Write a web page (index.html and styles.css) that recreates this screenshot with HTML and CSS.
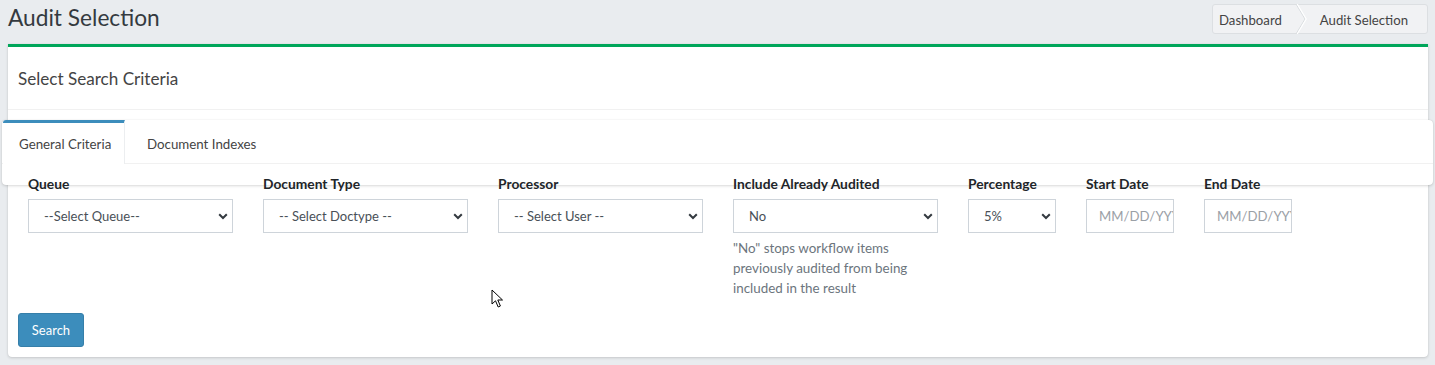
FILE: index.html
```html
<!DOCTYPE html>
<html lang="en">

<head>
    <meta charset="UTF-8">
    <meta name="viewport" content="width=device-width, initial-scale=1.0">
    <title>Audit Selection</title>
    <link rel="stylesheet" href="styles.css">
</head>

<body>
    <div class="content-header">
        <h1>Audit Selection</h1>
        <ol class="breadcrumb">
            <li><a href="#">Dashboard</a></li>
            <li class="sep">
                <svg width="12" height="30" viewBox="0 0 12 30">
                    <polyline points="1,0 10,15 1,30" fill="none" stroke="#d9dcdf" stroke-width="1"/>
                    <polyline points="2.2,0 11.2,15 2.2,30" fill="none" stroke="#ffffff" stroke-width="1.2"/>
                </svg>
            </li>
            <li class="active">Audit Selection</li>
        </ol>
    </div>

    <div class="card">
        <div class="card-header">
            <h3 class="card-title">Select Search Criteria</h3>
        </div>
        <div class="card-body">
            <div class="tabs-card">
                <ul class="nav-tabs">
                    <li class="active">General Criteria</li>
                    <li>Document Indexes</li>
                </ul>
                <div class="tab-content"></div>
            </div>

            <div class="form-row">
                <div class="field">
                    <label>Queue</label>
                    <div class="select-wrap">
                        <select><option>--Select Queue--</option></select>
                        <svg class="chevron" width="10" height="7" viewBox="0 0 10 7"><polyline points="1.2,1.2 5,5 8.8,1.2" fill="none" stroke="#343a40" stroke-width="2"/></svg>
                    </div>
                </div>
                <div class="field">
                    <label>Document Type</label>
                    <div class="select-wrap">
                        <select><option>-- Select Doctype --</option></select>
                        <svg class="chevron" width="10" height="7" viewBox="0 0 10 7"><polyline points="1.2,1.2 5,5 8.8,1.2" fill="none" stroke="#343a40" stroke-width="2"/></svg>
                    </div>
                </div>
                <div class="field">
                    <label>Processor</label>
                    <div class="select-wrap">
                        <select><option>-- Select User --</option></select>
                        <svg class="chevron" width="10" height="7" viewBox="0 0 10 7"><polyline points="1.2,1.2 5,5 8.8,1.2" fill="none" stroke="#343a40" stroke-width="2"/></svg>
                    </div>
                </div>
                <div class="field">
                    <label>Include Already Audited</label>
                    <div class="select-wrap">
                        <select><option>No</option><option>Yes</option></select>
                        <svg class="chevron" width="10" height="7" viewBox="0 0 10 7"><polyline points="1.2,1.2 5,5 8.8,1.2" fill="none" stroke="#343a40" stroke-width="2"/></svg>
                    </div>
                    <p class="help">"No" stops workflow items previously audited from being included in the result</p>
                </div>
                <div class="field">
                    <label>Percentage</label>
                    <div class="select-wrap">
                        <select><option>5%</option></select>
                        <svg class="chevron" width="10" height="7" viewBox="0 0 10 7"><polyline points="1.2,1.2 5,5 8.8,1.2" fill="none" stroke="#343a40" stroke-width="2"/></svg>
                    </div>
                </div>
                <div class="field">
                    <label>Start Date</label>
                    <input type="text" placeholder="MM/DD/YYYY">
                </div>
                <div class="field">
                    <label>End Date</label>
                    <input type="text" placeholder="MM/DD/YYYY">
                </div>
            </div>

            <button class="btn">Search</button>
        </div>
    </div>

    <svg class="cursor" width="13" height="20" viewBox="0 0 13 20">
        <path d="M1 1 L1 15 L4.5 11.8 L7.2 18 L9.4 17 L6.8 11 L11.5 11 Z" fill="#fff" stroke="#000" stroke-width="1" stroke-linejoin="round"/>
    </svg>
</body>

</html>
```

FILE: styles.css
```css
body {
    margin: 0;
    background-color: #e9ecef;
    font-family: Lato, "Liberation Sans", sans-serif;
    color: #333;
    position: relative;
    height: 365px;
    overflow: hidden;
}

ul,
ol {
    margin: 0;
    padding: 0;
    list-style: none;
}

.content-header {
    display: flex;
    justify-content: space-between;
    align-items: flex-start;
    padding: 4px 7px 0 8px;
    height: 40px;
}

.content-header h1 {
    margin: 0;
    font-size: 22.7px;
    font-weight: 400;
    line-height: 28px;
    color: #343a40;
}

.breadcrumb {
    display: flex;
    align-items: center;
    height: 30px;
    box-sizing: border-box;
    padding: 2px 19px 0 6px;
    background-color: #f1f2f4;
    border: 1px solid #dcdfe2;
    border-radius: 3px;
    font-size: 13.2px;
    color: #444;
}

.breadcrumb a {
    color: #444;
    text-decoration: none;
}

.breadcrumb .sep {
    display: flex;
    margin: -2px 13px 0 13px;
}

.card {
    margin: 0 7px 0 8px;
    background-color: #fff;
    border-top: 3px solid #00a65a;
    border-radius: 0 0 4px 4px;
    box-shadow: 0 0 1px rgba(0, 0, 0, .125), 0 1px 3px rgba(0, 0, 0, .15);
}

.card-header {
    height: 62px;
    display: flex;
    align-items: center;
    padding: 0 10px;
    border-bottom: 1px solid #f1f1f1;
}

.card-title {
    margin: 0;
    font-size: 17.1px;
    font-weight: 400;
    color: #444;
}

.card-body {
    padding: 10px 10px 10px 10px;
}

.tabs-card {
    margin: 0 -15px 0 -16px;
    background-color: #fff;
    border-radius: 4px;
    box-shadow: 0 0 1px rgba(0, 0, 0, .15), 0 1px 3px rgba(0, 0, 0, .15);
}

.nav-tabs {
    display: flex;
    height: 43px;
    border-bottom: 1px solid #f1f1f1;
}

.nav-tabs li {
    padding: 0 22px;
    display: flex;
    align-items: center;
    white-space: nowrap;
    font-size: 13.3px;
    color: #444;
    margin-bottom: -1px;
    border-top: 3px solid transparent;
}

.nav-tabs li.active {
    width: 122px;
    box-sizing: border-box;
    margin-left: 1px;
    padding: 0 0 0 16px;
    border-top-color: #3c8dbc;
    border-right: 1px solid #eceef0;
    border-top-left-radius: 3px;
    background-color: #fff;
}

.tab-content {
    height: 21px;
}

.form-row {
    display: grid;
    grid-template-columns: repeat(4, 205px) repeat(3, 88px);
    column-gap: 30px;
    padding-left: 10px;
    margin-top: -11px;
    position: relative;
}

.field label {
    display: block;
    font-size: 13.8px;
    font-weight: 700;
    line-height: 20px;
    color: #212529;
    margin-bottom: 5px;
}

.select-wrap {
    position: relative;
}

.field select,
.field input {
    display: block;
    width: 100%;
    height: 34px;
    box-sizing: border-box;
    border: 1px solid #ced4da;
    border-radius: 0;
    background-color: #fff;
    font-family: Lato, "Liberation Sans", sans-serif;
    font-size: 13px;
    color: #495057;
    outline: none;
}

.field select {
    appearance: none;
    -webkit-appearance: none;
    padding: 0 24px 0 15px;
}

.field input {
    padding: 0 0 0 12px;
    font-size: 13.2px;
}

.field input::placeholder {
    color: #9aa0a6;
}

.chevron {
    position: absolute;
    right: 5px;
    top: 14px;
}

.help {
    margin: 5px 0 0;
    font-size: 13.4px;
    line-height: 20px;
    color: #6c757d;
    width: 195px;
}

.btn {
    display: block;
    margin-top: 15px;
    width: 66px;
    height: 34px;
    background-color: #3c8dbc;
    border: 1px solid #367fa9;
    border-radius: 3px;
    color: #fff;
    font-family: Lato, "Liberation Sans", sans-serif;
    font-size: 13px;
    cursor: pointer;
}

.cursor {
    position: absolute;
    left: 491px;
    top: 289px;
}
```
